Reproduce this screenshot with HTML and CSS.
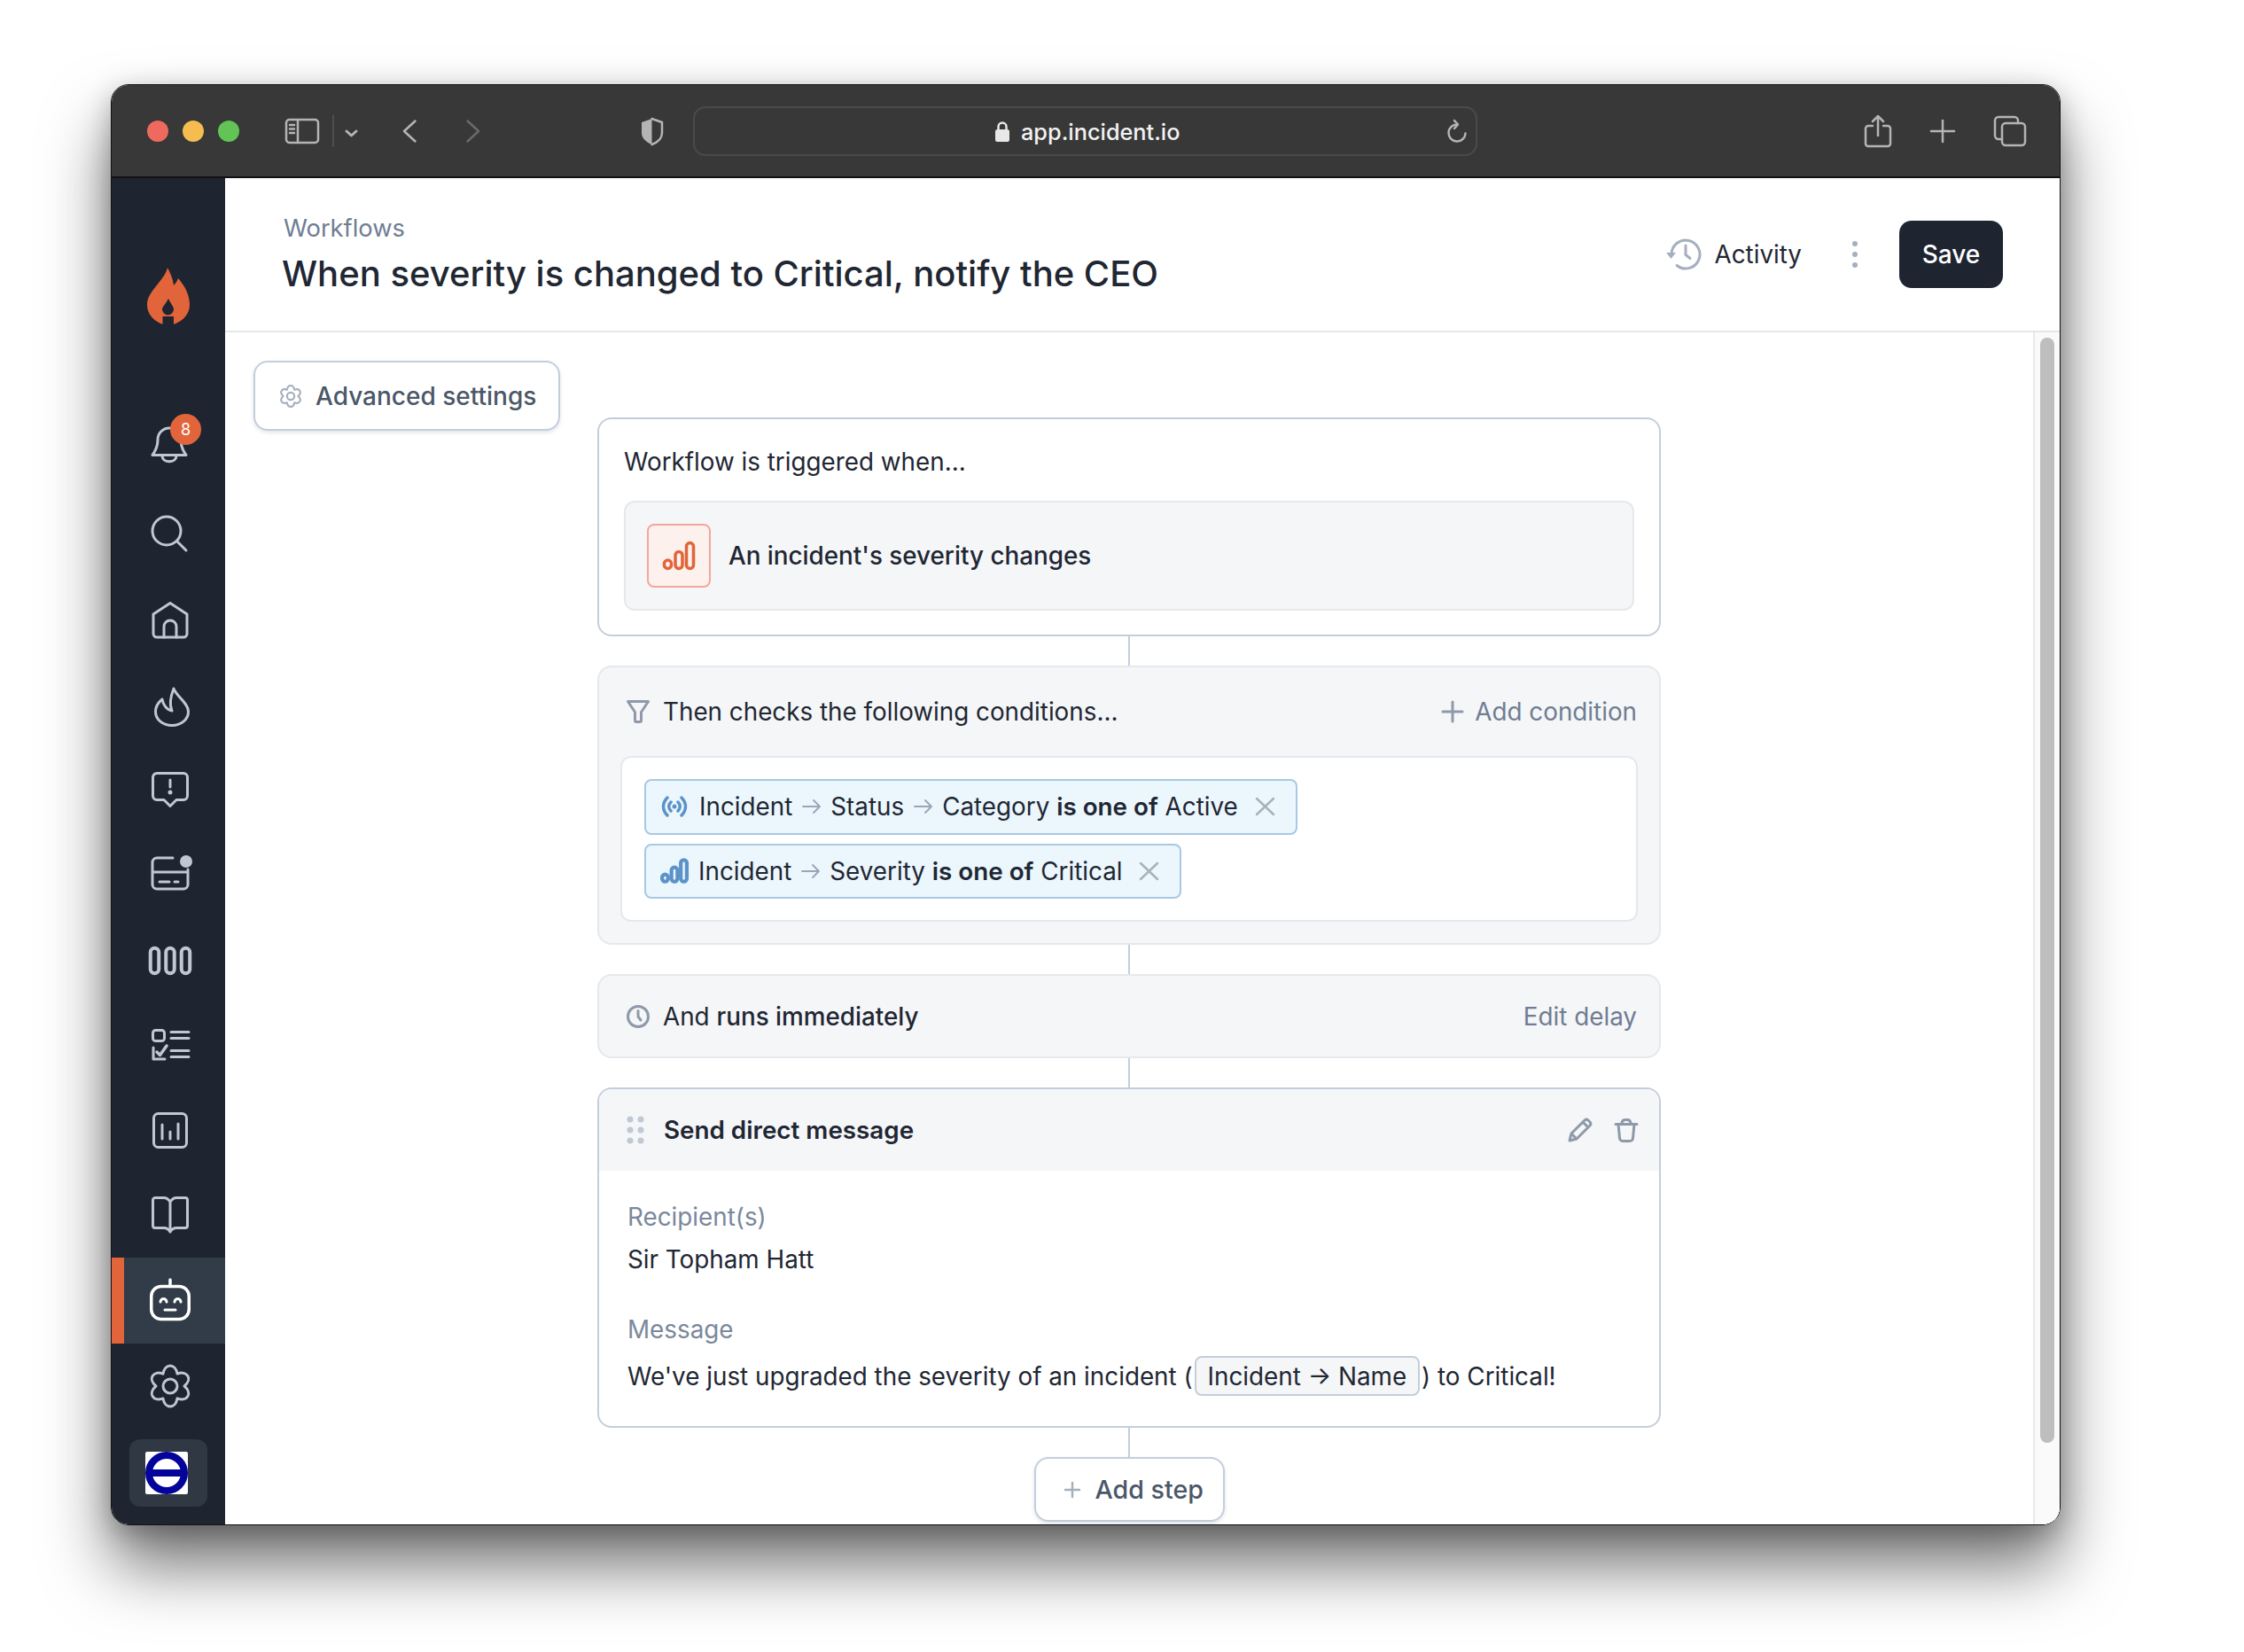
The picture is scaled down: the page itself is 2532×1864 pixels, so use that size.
FILE: index.html
```html
<!DOCTYPE html>
<html lang="en">
<head>
    <meta charset="UTF-8">
    <title>When severity is changed to Critical, notify the CEO</title>
    <link rel="stylesheet" href="styles.css">
</head>
<body>
    <div class="window">
        <!-- browser chrome -->
        <div class="titlebar">
            <div class="lights">
                <span class="light red"></span>
                <span class="light yellow"></span>
                <span class="light green"></span>
            </div>
            <svg class="tb-sidebar" width="38" height="28" viewBox="0 0 38 28"><rect x="1" y="1" width="36" height="26" rx="3.5"/><path d="M14 1v26M5 7h5M5 11.5h5M5 16h5"/></svg>
            <span class="tb-sep"></span>
            <svg class="tb-chev" width="15" height="9" viewBox="0 0 15 9"><path d="M2 2l5.5 5L13 2"/></svg>
            <svg class="tb-back" width="16" height="26" viewBox="0 0 16 26"><path d="M14.500 1.500L2 13l12.500 11.500"/></svg>
            <svg class="tb-forward" width="16" height="26" viewBox="0 0 16 26"><path d="M1.500 1.500L14 13 1.500 24.500"/></svg>
            <svg class="tb-shield" width="27" height="31" viewBox="0 0 27 31"><path class="solid" d="M13.500 1L2 5v12c0 6 5 10.500 11.500 13z"/><path d="M13.500 1L25 5v12c0 6-5 10.500-11.500 13"/></svg>
            <div class="urlbar">
                <svg class="tb-lock" width="16" height="23" viewBox="0 0 16 23"><path d="M3.500 10V6a4.500 4.500 0 0 1 9 0v4" class="shackle"/><rect x="0" y="9" width="16" height="14" rx="2.500"/></svg>
                <span class="url">app.incident.io</span>
                <svg class="tb-reload" width="23" height="26" viewBox="0 0 23 26"><path d="M12 5.500a9.500 9.500 0 1 0 9.500 10M9 1l4 4.500L9 10"/></svg>
            </div>
            <div class="tb-right">
                <svg class="tb-share" width="30" height="36" viewBox="0 0 30 36"><path d="M9 12H4a3 3 0 0 0-3 3v17a3 3 0 0 0 3 3h22a3 3 0 0 0 3-3V15a3 3 0 0 0-3-3h-5M15 23V2M9 7l6-6 6 6"/></svg>
                <svg class="tb-plus" width="28" height="26" viewBox="0 0 28 26"><path d="M14 1v24M1 13h26"/></svg>
                <svg class="tb-tabs" width="36" height="34" viewBox="0 0 36 34"><rect x="9" y="8" width="26" height="25" rx="4"/><path d="M9 26H5a4 4 0 0 1-4-4V5a4 4 0 0 1 4-4h18a4 4 0 0 1 4 4v3"/></svg>
            </div>
        </div>

        <div class="app">
            <nav class="sidebar">
                <svg class="logo" width="48" height="64" viewBox="0 0 48 64"><path fill-rule="evenodd" d="M23 0c3 6 6 12 7 20 2-2 4-5 5-8 7 8 13 18 13 30 0 10-7 18-18 22V55H17.500v9C7 60 0 52 0 42 0 26 19 16 23 0zM24 35c-3 6-7 9-7 12a6.500 6.500 0 0 0 13 0c0-3-3-6-6-12z"/></svg>

                <a class="nav-item">
                    <svg class="shift-left" width="40" height="40" viewBox="0 0 40 40"><path d="M7 14a13 13 0 0 1 26 0c0 8 2 12 6 17.500H1C5 26 7 22 7 14z"/><path d="M12 32c0 9 16 9 16 0"/></svg>
                    <span class="badge">8</span>
                </a>
                <a class="nav-item nudge-2">
                    <svg class="shift-left" width="42" height="42" viewBox="0 0 42 42"><circle cx="18" cy="18" r="16"/><path d="M29.500 29.500L40 40"/></svg>
                </a>
                <a class="nav-item nudge-3">
                    <svg width="42" height="42" viewBox="0 0 42 42"><path d="M2 14L21 1.500 40 14v22a4 4 0 0 1-4 4H6a4 4 0 0 1-4-4z"/><path d="M14 40V28a7 7 0 0 1 14 0v12"/></svg>
                </a>
                <a class="nav-item nudge-4">
                    <svg class="shift-right" width="40" height="45" viewBox="0 0 40 45"><path d="M22 2c-4 10-5 18-2 25-6-1-10-7-11-13-5 4-7.500 8-7.500 14 0 9 8.500 15.500 18.500 15.500S38.500 37 38.500 28C38.500 18 26 12 22 2z"/></svg>
                </a>
                <a class="nav-item nudge-2">
                    <svg width="42" height="41" viewBox="0 0 42 41"><path d="M6 1.500h30a4.500 4.500 0 0 1 4.500 4.500v21a4.500 4.500 0 0 1-4.500 4.500h-8l-7 7-7-7H6A4.500 4.500 0 0 1 1.500 27V6A4.500 4.500 0 0 1 6 1.500z"/><path d="M21 9v8"/><circle class="solid" cx="21" cy="23" r="2.500"/></svg>
                </a>
                <a class="nav-item">
                    <svg class="shift-right" width="50" height="42" viewBox="0 0 50 42"><path d="M26 4H8a5 5 0 0 0-5 5v25a5 5 0 0 0 5 5h30a5 5 0 0 0 5-5V17M3 20h40M11 31h11M28 31h4"/><circle class="solid" cx="41" cy="8" r="7"/></svg>
                </a>
                <a class="nav-item nudge-2 thick">
                    <svg width="48" height="32" viewBox="0 0 48 32"><rect x="1.750" y="1.750" width="9.500" height="28.500" rx="4.750"/><rect x="19.250" y="1.750" width="9.500" height="28.500" rx="4.750"/><rect x="36.750" y="1.750" width="9.500" height="28.500" rx="4.750"/></svg>
                </a>
                <a class="nav-item nudge-1">
                    <svg width="42" height="36" viewBox="0 0 42 36"><rect x="1.500" y="1.500" width="13" height="12" rx="3"/><path d="M22 3.500h20M22 10.500h20M22 24.500h20M22 31.500h20M15 34H2V21"/><path class="check" d="M6 26l3.500 3.500L17 19"/></svg>
                </a>
                <a class="nav-item nudge-1">
                    <svg width="40" height="41" viewBox="0 0 40 41"><rect x="1.500" y="1.500" width="37" height="38" rx="5"/><path d="M11 14v16M20 22v8M29 13v17"/></svg>
                </a>
                <a class="nav-item">
                    <svg width="42" height="42" viewBox="0 0 42 42"><path d="M21 6c-2-3-4-4.500-7-4.500H4A2.500 2.500 0 0 0 1.500 4v29A2.500 2.500 0 0 0 4 35.500h10c3 0 5 1 7 4.500 2-3.500 4-4.500 7-4.500h10a2.500 2.500 0 0 0 2.500-2.500V4A2.500 2.500 0 0 0 38 1.500H28c-3 0-5 1.500-7 4.500zM21 6v34"/></svg>
                </a>
                <a class="nav-item active">
                    <svg width="46" height="46" viewBox="0 0 46 46"><rect x="1.750" y="7.500" width="42.500" height="37" rx="11"/><path d="M23 0v7.500"/><path class="face" d="M12 25a3.500 3.500 0 0 1 7 0M28 25a3.500 3.500 0 0 1 7 0M17 34h12"/></svg>
                </a>
                <a class="nav-item">
                    <svg width="50" height="50" viewBox="0 0 50 50"><path d="M17 11.100C19-1 31-1 33 11.100 44.500 6.800 50.500 17.200 41 25c9.500 7.800 3.500 18.200-8 13.900C31 51 19 51 17 38.900 5.500 43.200-.5 32.800 9 25-.5 17.200 5.500 6.800 17 11.100z"/><circle cx="25" cy="25" r="8"/></svg>
                </a>

                <div class="org">
                    <svg width="48" height="48" viewBox="0 0 48 48"><rect class="org-bg" width="48" height="48" rx="2"/><circle class="org-ring" cx="24" cy="24" r="20"/><rect class="org-bar" x="1" y="20" width="46" height="8"/></svg>
                </div>
            </nav>

            <main class="main">
                <header class="page-header">
                    <div class="page-titles">
                        <div class="crumb">Workflows</div>
                        <h1>When severity is changed to Critical, notify the CEO</h1>
                    </div>
                    <div class="page-actions">
                        <a class="activity">
                            <svg width="40" height="36" viewBox="0 0 40 36"><path d="M6 18A16 16 0 1 1 12 30.500"/><path d="M22 8v10.500l5 4"/><path class="solid" d="M0 16h11l-5.500 7z"/></svg>
                            Activity
                        </a>
                        <svg class="dots" width="8" height="32" viewBox="0 0 8 32"><circle cx="4" cy="4" r="3"/><circle cx="4" cy="16" r="3"/><circle cx="4" cy="28" r="3"/></svg>
                        <button class="save">Save</button>
                    </div>
                </header>

                <div class="body-row">
                    <div class="content">
                        <div class="left-col">
                            <button class="btn-settings">
                                <svg width="26" height="26" viewBox="0 0 50 50"><path d="M17 11.100C19-1 31-1 33 11.100 44.500 6.800 50.500 17.200 41 25c9.500 7.800 3.500 18.200-8 13.900C31 51 19 51 17 38.900 5.500 43.200-.5 32.800 9 25-.5 17.200 5.500 6.800 17 11.100z"/><circle cx="25" cy="25" r="8"/></svg>
                                Advanced settings
                            </button>
                        </div>

                        <div class="flow">
                            <section class="card trigger">
                                <div class="trigger-title">Workflow is triggered when...</div>
                                <div class="trigger-box">
                                    <span class="trigger-icon">
                                        <svg width="36" height="32" viewBox="0 0 36 32"><rect x="1.500" y="21" width="8" height="9.500" rx="4"/><rect x="14" y="11.500" width="8" height="19" rx="4"/><rect x="26.500" y="1.500" width="8" height="29" rx="4"/></svg>
                                    </span>
                                    An incident's severity changes
                                </div>
                            </section>
                            <div class="line"></div>

                            <section class="card soft checks">
                                <div class="soft-head">
                                    <svg class="i-grey" width="26" height="26" viewBox="0 0 26 26"><path d="M1.500 1.500h23L16.500 13.500v9.500a1.500 1.500 0 0 1-1.500 1.500h-4A1.500 1.500 0 0 1 9.500 23v-9.500z"/></svg>
                                    <span class="soft-title">Then checks the following conditions...</span>
                                    <a class="soft-link">
                                        <svg class="i-grey" width="24" height="24" viewBox="0 0 24 24"><path d="M12 1v22M1 12h22"/></svg>
                                        Add condition
                                    </a>
                                </div>
                                <div class="conditions">
                                    <div class="tag">
                                        <svg class="i-blue" width="30" height="24" viewBox="0 0 30 24"><path d="M7 2C1 8 1 16 7 22M23 2c6 6 6 14 0 20M11 7c-3 3-3 7 0 10M19 7c3 3 3 7 0 10"/><circle class="solid" cx="15" cy="12" r="2.500"/></svg>
                                        <span>Incident</span>
                                        <svg class="arrow" width="20" height="16" viewBox="0 0 20 16"><path d="M0 8h19M12 1l7 7-7 7"/></svg>
                                        <span>Status</span>
                                        <svg class="arrow" width="20" height="16" viewBox="0 0 20 16"><path d="M0 8h19M12 1l7 7-7 7"/></svg>
                                        <span>Category <b>is one of</b> Active</span>
                                        <svg class="close" width="21" height="20" viewBox="0 0 21 20"><path d="M1 1l19 18M20 1L1 19"/></svg>
                                    </div>
                                    <div class="tag">
                                        <svg class="i-blue bars" width="32" height="27" viewBox="0 0 36 32"><rect x="1.500" y="21" width="8" height="9.500" rx="4"/><rect x="14" y="11.500" width="8" height="19" rx="4"/><rect x="26.500" y="1.500" width="8" height="29" rx="4"/></svg>
                                        <span>Incident</span>
                                        <svg class="arrow" width="20" height="16" viewBox="0 0 20 16"><path d="M0 8h19M12 1l7 7-7 7"/></svg>
                                        <span>Severity <b>is one of</b> Critical</span>
                                        <svg class="close" width="21" height="20" viewBox="0 0 21 20"><path d="M1 1l19 18M20 1L1 19"/></svg>
                                    </div>
                                </div>
                            </section>
                            <div class="line"></div>

                            <section class="card soft delay">
                                <svg class="i-grey" width="26" height="26" viewBox="0 0 26 26"><circle cx="13" cy="13" r="11.500"/><path d="M13 6.500V13l3 4"/></svg>
                                <span class="soft-title">And <span class="medium">runs immediately</span></span>
                                <a class="soft-link">Edit delay</a>
                            </section>
                            <div class="line"></div>

                            <section class="card step">
                                <div class="step-head">
                                    <svg class="grip" width="20" height="32" viewBox="0 0 20 32"><circle cx="4" cy="4" r="3.500"/><circle cx="16" cy="4" r="3.500"/><circle cx="4" cy="16" r="3.500"/><circle cx="16" cy="16" r="3.500"/><circle cx="4" cy="28" r="3.500"/><circle cx="16" cy="28" r="3.500"/></svg>
                                    <span class="step-title">Send direct message</span>
                                    <svg class="i-grey pencil" width="28" height="28" viewBox="0 0 28 28"><path d="M2 26l2-8L19 3a3 3 0 0 1 4 0l2 2a3 3 0 0 1 0 4L10 24zM4 18l6 6M17 5l6 6"/></svg>
                                    <svg class="i-grey" width="26" height="27" viewBox="0 0 26 27"><path d="M1 6.500h24M8 6.500V5a4 4 0 0 1 4-3.500h2A4 4 0 0 1 18 5v1.500M4 6.500L5.500 22a3.500 3.500 0 0 0 3.500 3.500h8a3.500 3.500 0 0 0 3.500-3.500L22 6.500"/></svg>
                                </div>
                                <div class="step-body">
                                    <div class="field-label">Recipient(s)</div>
                                    <div class="field-value">Sir Topham Hatt</div>
                                    <div class="field-label second">Message</div>
                                    <div class="field-value message">We've just upgraded the severity of an incident (<span class="chip">Incident → Name</span>) to Critical!</div>
                                </div>
                            </section>
                            <div class="line"></div>

                            <button class="add-step">
                                <svg width="18" height="18" viewBox="0 0 18 18"><path d="M9 1v16M1 9h16"/></svg>
                                Add step
                            </button>
                        </div>
                    </div>

                    <div class="scrolltrack"><div class="scrollthumb"></div></div>
                </div>
            </main>
        </div>
    </div>
</body>
</html>
```

FILE: styles.css
```css
* {
    box-sizing: border-box;
}

html, body {
    margin: 0;
    background: #fff;
}

body {
    padding: 95px 206px 0 125px;
    height: 1864px;
    overflow: hidden;
    font-family: Inter, "Noto Sans", sans-serif;
    font-size: 27.8px;
    color: #1f2733;
}

svg {
    display: block;
    flex: none;
    fill: none;
    stroke-linecap: round;
    stroke-linejoin: round;
    overflow: visible;
}

.window {
    width: 2200px;
    height: 1626px;
    border: 1px solid #111;
    border-radius: 20px;
    box-shadow: 0 46px 75px rgba(0, 0, 0, 0.55), 0 8px 30px rgba(0, 0, 0, 0.25);
    display: flex;
    flex-direction: column;
    overflow: hidden;
}

/* browser chrome */
.titlebar {
    height: 105px;
    flex: none;
    background: #383838;
    border-bottom: 2px solid #111;
    display: flex;
    align-items: center;
    padding: 1px 38px 0 40px;
}

.titlebar svg {
    stroke: #b4b4b4;
    stroke-width: 2.5;
}

.lights {
    display: flex;
    gap: 16px;
}

.light {
    width: 24px;
    height: 24px;
    border-radius: 50%;
}

.red { background: #ee6a5f; }
.yellow { background: #f5bd4f; }
.green { background: #61c454; }

.tb-sidebar {
    margin-left: 52px;
}

.tb-sep {
    width: 2px;
    height: 36px;
    background: #4e4e4e;
    margin-left: 15px;
}

.tb-chev {
    margin-left: 12px;
    margin-top: 4px;
}

.titlebar .tb-chev {
    stroke-width: 3;
}

.tb-back {
    margin-left: 50px;
}

.tb-forward {
    margin-left: 56px;
}

.titlebar .tb-forward {
    stroke: #6a6a6a;
}

.tb-shield {
    margin-left: 180px;
}

.titlebar .solid {
    fill: #b4b4b4;
    stroke: none;
}

.urlbar {
    margin-left: 33px;
    width: 885px;
    height: 56px;
    border: 2px solid #4a4a4a;
    border-radius: 14px;
    display: flex;
    align-items: center;
    padding: 0 10px 0 339px;
    color: #f2f2f2;
    font-weight: 500;
    font-size: 25.3px;
}

.titlebar .tb-lock rect {
    fill: #e8e8e8;
    stroke: none;
}

.titlebar .tb-lock .shackle {
    stroke: #e8e8e8;
}

.url {
    margin-left: 13px;
}

.tb-reload {
    margin-left: auto;
}

.tb-right {
    margin-left: auto;
    display: flex;
    align-items: center;
    gap: 44px;
}

/* app frame */
.app {
    flex: 1;
    display: flex;
    min-height: 0;
}

.sidebar {
    width: 128px;
    flex: none;
    background: #1e2530;
    padding-top: 101px;
    display: flex;
    flex-direction: column;
}

.logo {
    align-self: center;
    margin-bottom: 88px;
    fill: #e2643b;
    margin-right: 1px;
}

.nav-item {
    height: 96.5px;
    flex: none;
    position: relative;
    display: flex;
    align-items: center;
    justify-content: center;
    padding-left: 4px;
}

/* small per-icon offsets, the icons don't sit on an even grid */
.nudge-1 svg { margin-top: 3px; }
.nudge-2 svg { margin-top: 6px; }
.nudge-3 svg { margin-top: 9px; }
.nudge-4 svg { margin-top: 12px; }
.shift-left { margin-right: 3px; }
.shift-right { margin-left: 3px; }

.nav-item svg {
    stroke: #bfc7d4;
    stroke-width: 3;
}

.nav-item.thick svg {
    stroke-width: 4;
}

.nav-item .solid {
    fill: #bfc7d4;
    stroke: none;
}

.nav-item .check {
    stroke-width: 3.5;
}

.nav-item.active {
    background: #323b48;
    border-left: 14px solid #e2643b;
    padding-left: 0;
    padding-right: 10px;
}

.nav-item.active svg {
    stroke: #fff;
    stroke-width: 3.5;
}

.nav-item.active .face {
    stroke-width: 3;
}

.badge {
    position: absolute;
    left: 66px;
    top: 13px;
    width: 35px;
    height: 35px;
    border-radius: 50%;
    background: #e2643b;
    color: #fff;
    font-size: 18px;
    display: flex;
    align-items: center;
    justify-content: center;
}

.org {
    width: 88px;
    height: 76px;
    margin: 12px 0 0 20px;
    background: #2f3843;
    border-radius: 12px;
    display: flex;
    align-items: center;
    justify-content: center;
    padding-right: 4px;
}

.org-bg { fill: #fff; }
.org-ring { fill: #fff; stroke: #04049a; stroke-width: 8; }
.org-bar { fill: #04049a; }

/* page */
.main {
    flex: 1;
    min-width: 0;
    display: flex;
    flex-direction: column;
    background: #fff;
}

.page-header {
    height: 174px;
    flex: none;
    border-bottom: 2px solid #e3e7ec;
    display: flex;
    align-items: flex-start;
    justify-content: space-between;
    padding: 39px 64px 0 65px;
}

.crumb {
    color: #6f7d93;
    font-size: 27.3px;
    line-height: 36px;
    padding-left: 1px;
}

h1 {
    margin: 8px 0 0 -1px;
    font-size: 40px;
    line-height: 50px;
    font-weight: 500;
}

.page-actions {
    display: flex;
    align-items: center;
    height: 76px;
    margin-top: 9px;
}

.activity {
    display: flex;
    align-items: center;
    gap: 15px;
    font-size: 27.8px;
}

.activity svg {
    stroke: #a6afbf;
    stroke-width: 3;
}

.activity .solid {
    fill: #a6afbf;
    stroke: none;
}

.dots {
    margin-left: 56px;
    fill: #a6afbf;
}

.save {
    margin-left: 46px;
    width: 117px;
    height: 76px;
    border: none;
    border-radius: 14px;
    background: #1e2530;
    color: #fff;
    font: 500 28px Inter, sans-serif;
}

.body-row {
    flex: 1;
    min-height: 0;
    display: flex;
}

.content {
    flex: 1;
    min-width: 0;
    display: flex;
    padding: 32px 0 0 32px;
    overflow: hidden;
}

.left-col {
    width: 346px;
    flex: none;
    margin-right: 42px;
}

.btn-settings {
    width: 346px;
    height: 79px;
    background: #fff;
    border: 2px solid #c4cedb;
    border-radius: 16px;
    box-shadow: 0 2px 4px rgba(100, 116, 139, 0.2);
    display: flex;
    align-items: center;
    gap: 15px;
    padding: 0 0 0 27px;
    color: #4b5768;
    font: 500 28px Inter, sans-serif;
}

.btn-settings svg {
    stroke: #a6afbf;
    stroke-width: 4;
}

.flow {
    width: 1200px;
    flex: none;
    padding-top: 64px;
    display: flex;
    flex-direction: column;
    align-items: center;
}

.line {
    width: 2px;
    height: 33px;
    flex: none;
    background: #c4cedb;
}

.card {
    width: 100%;
    flex: none;
    border-radius: 16px;
    border: 2px solid #c4cedb;
    background: #fff;
}

.card.soft {
    background: #f5f6f8;
    border-color: #e5e8ec;
}

.trigger {
    height: 247px;
    padding: 28px 28px 0;
}

.trigger-title {
    line-height: 40px;
    margin-bottom: 24px;
}

.trigger-box {
    height: 124px;
    background: #f5f6f8;
    border: 2px solid #e5e8ec;
    border-radius: 12px;
    display: flex;
    align-items: center;
    gap: 20px;
    padding-left: 24px;
    font-weight: 500;
}

.trigger-icon {
    width: 72px;
    height: 72px;
    background: #fdf1ee;
    border: 2px solid #f4a79b;
    border-radius: 8px;
    display: flex;
    align-items: center;
    justify-content: center;
}

.trigger-icon svg {
    stroke: #e2643b;
    stroke-width: 3.5;
}

.checks {
    height: 315px;
}

.soft-head {
    height: 100px;
    display: flex;
    align-items: center;
    padding: 0 25px 0 31px;
}

.soft-title {
    margin-left: 15px;
}

.medium {
    font-weight: 500;
}

.soft-link {
    margin-left: auto;
    display: flex;
    align-items: center;
    gap: 13px;
    color: #6f7d93;
}

.i-grey {
    stroke: #8e99aa;
    stroke-width: 3;
}

.conditions {
    height: 187px;
    margin: 0 24px;
    background: #fff;
    border: 2px solid #e5e8ec;
    border-radius: 12px;
    padding: 24px 25px;
    display: flex;
    flex-direction: column;
    align-items: flex-start;
    gap: 10px;
}

.tag {
    height: 63px;
    background: #ebf6fd;
    border: 2px solid #a8c8e4;
    border-radius: 8px;
    display: flex;
    align-items: center;
    padding: 0 24px 0 17px;
    white-space: pre;
}

.tag b {
    font-weight: 600;
}

.tag > span:first-of-type {
    margin-left: 13px;
}

.i-blue {
    stroke: #5b93c8;
    stroke-width: 3.5;
}

.i-blue.bars {
    margin-left: -1px;
    margin-right: -2px;
    stroke-width: 5;
}

.i-blue .solid {
    fill: #5b93c8;
    stroke: none;
}

.arrow {
    margin: 0 11.5px;
    stroke: #9aa5b5;
    stroke-width: 1.8;
}

.close {
    margin-left: 20px;
    stroke: #a9b1bd;
    stroke-width: 2.5;
}

.delay {
    height: 95px;
    display: flex;
    align-items: center;
    padding: 0 25px 0 31px;
}

.step {
    height: 384px;
    overflow: hidden;
}

.step-head {
    height: 92px;
    background: #f5f6f8;
    display: flex;
    align-items: center;
    padding: 0 24px 0 31px;
}

.grip {
    fill: #c0c8d4;
}

.step-title {
    margin-left: 22px;
    font-weight: 600;
}

.pencil {
    margin-left: auto;
    margin-right: 25px;
}

.step-body {
    padding: 34px 32px 0;
}

.field-label {
    color: #7a889c;
    line-height: 36px;
}

.field-label.second {
    margin-top: 43px;
}

.field-value {
    line-height: 36px;
    margin-top: 12px;
}

.message {
    display: flex;
    align-items: center;
    white-space: pre;
    margin-top: 12px;
}

.chip {
    height: 45px;
    margin: 0 2px;
    padding: 0 13px;
    background: #f5f6f8;
    border: 2px solid #c4cedb;
    border-radius: 8px;
    display: flex;
    align-items: center;
    color: #1f2733;
}

.add-step {
    width: 215px;
    height: 73px;
    flex: none;
    background: #fff;
    border: 2px solid #c4cedb;
    border-radius: 16px;
    box-shadow: 0 2px 4px rgba(100, 116, 139, 0.2);
    display: flex;
    align-items: center;
    gap: 17px;
    padding: 0 0 0 32px;
    color: #4b5768;
    font: 500 28.6px Inter, sans-serif;
}

.add-step svg {
    stroke: #a6afbf;
    stroke-width: 2.5;
}

.scrolltrack {
    width: 30px;
    flex: none;
    background: #fafafa;
    border-left: 2px solid #e9e9e9;
    padding: 6px 6px 0 6px;
}

.scrollthumb {
    width: 16px;
    height: 1247px;
    border-radius: 8px;
    background: #bebebe;
}
```
